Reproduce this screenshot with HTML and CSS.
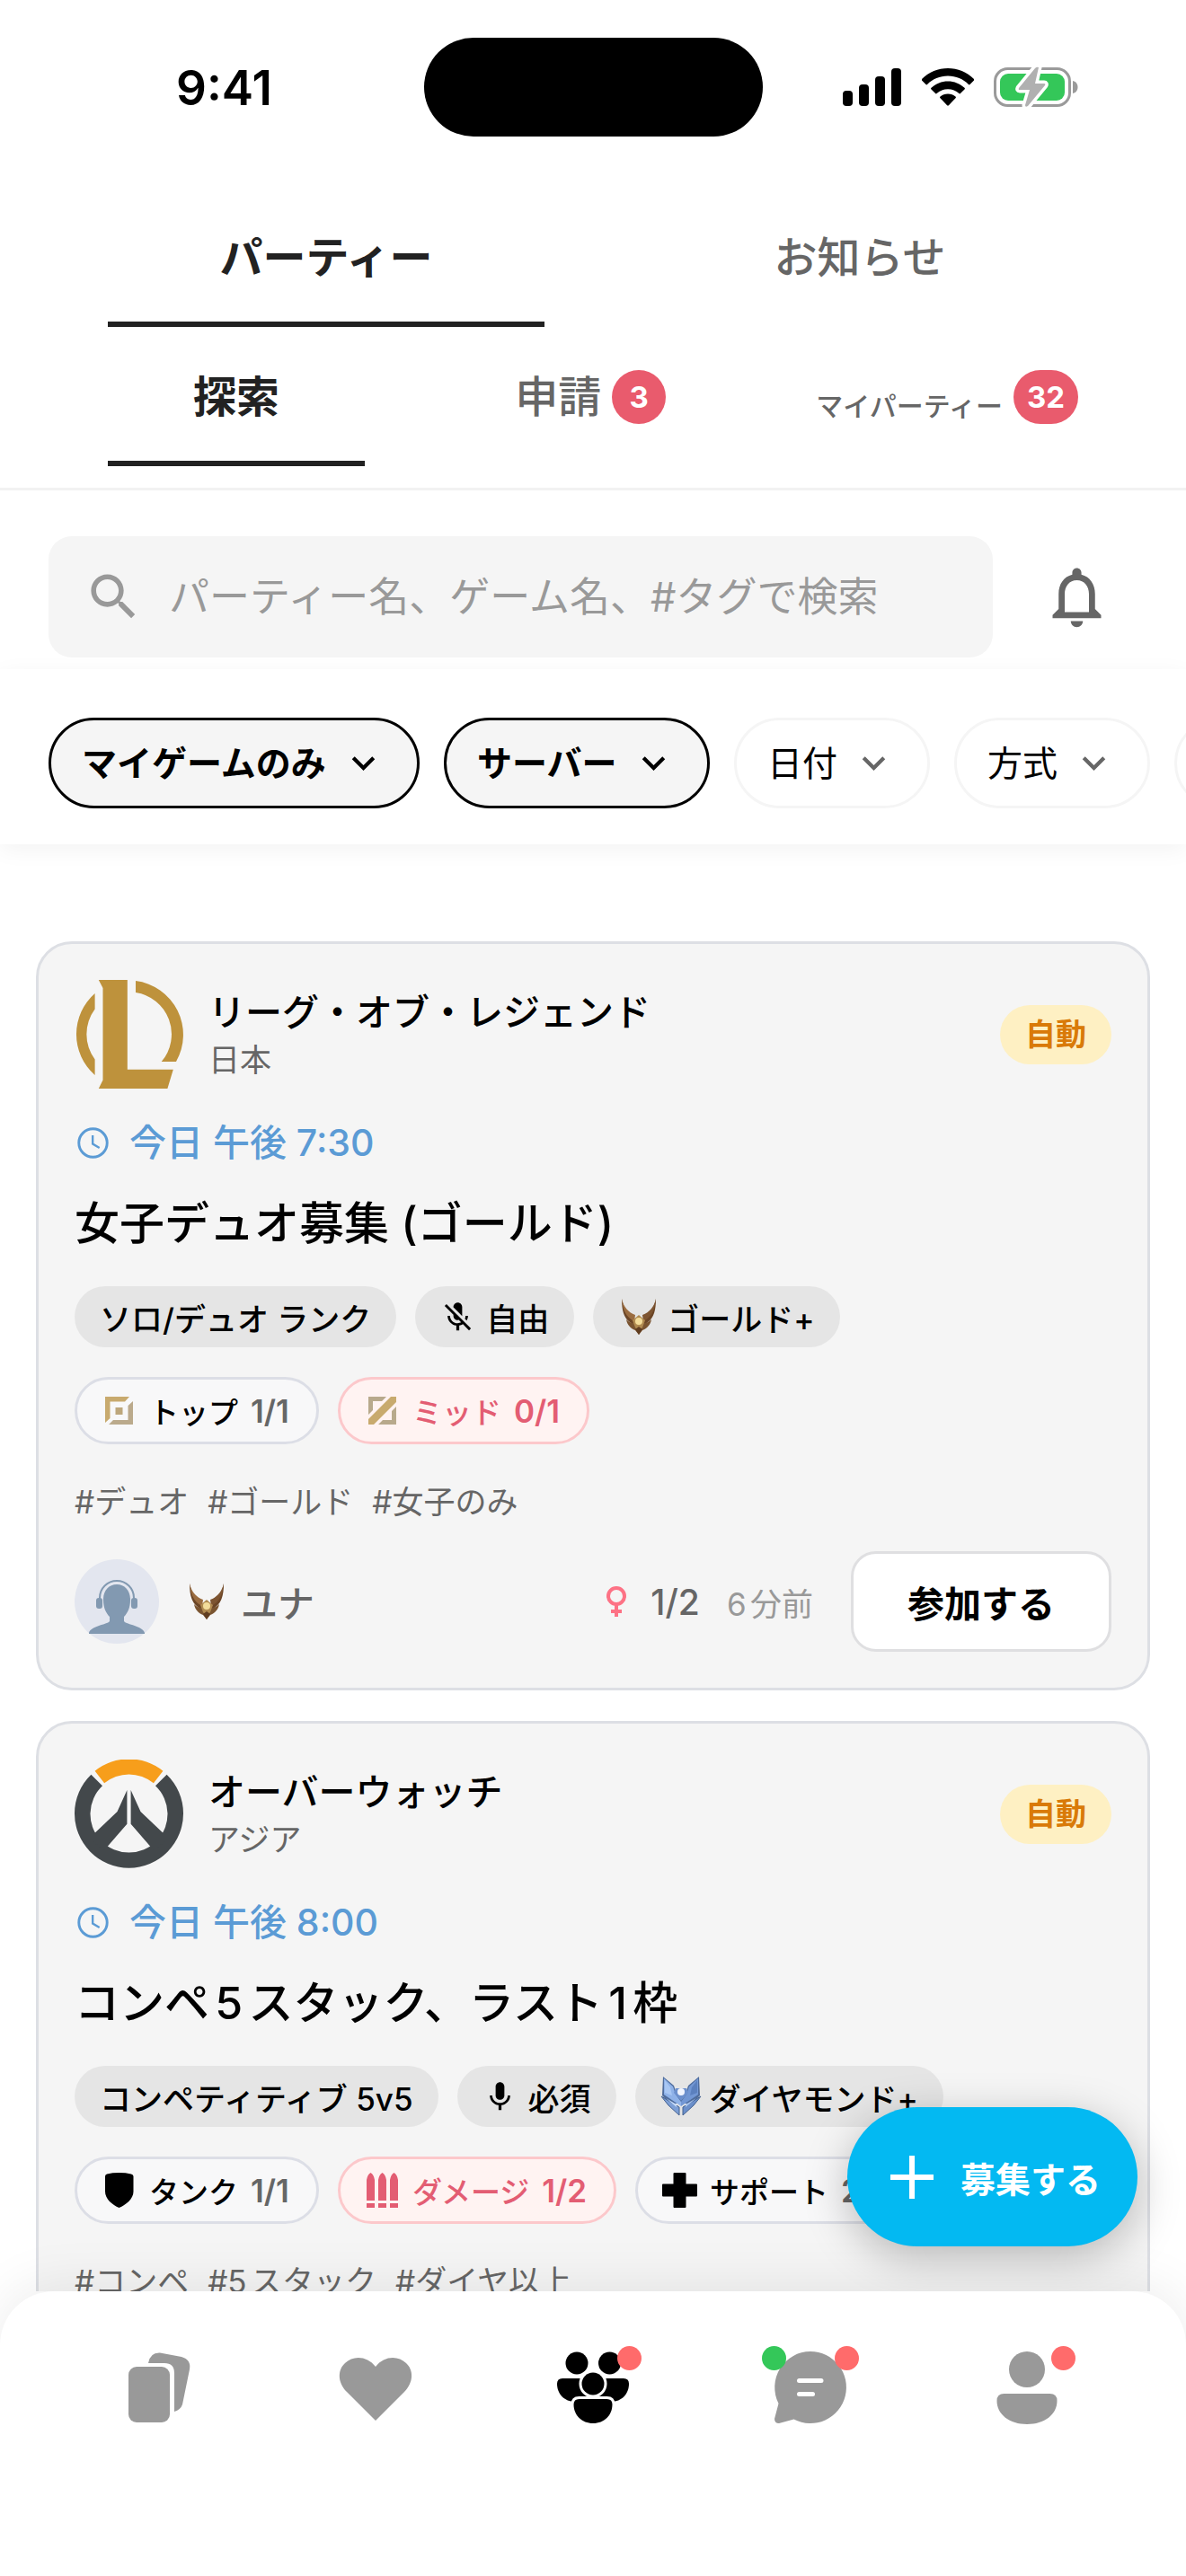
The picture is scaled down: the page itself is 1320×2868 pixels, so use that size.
FILE: index.html
```html
<!DOCTYPE html>
<html lang="ja">
<head>
    <meta charset="UTF-8">
    <meta name="viewport" content="width=device-width, initial-scale=1.0">
    <title>パーティー</title>
    <link rel="stylesheet" href="styles.css">
</head>
<body>
    <!-- Shared icons -->
    <svg class="sprite" aria-hidden="true">
        <symbol id="chevron" viewBox="0 0 24 24">
            <path d="M16.59 8.59 12 13.17 7.41 8.59 6 10l6 6 6-6z" fill="currentColor"/>
        </symbol>
        <symbol id="clock" viewBox="0 0 24 24">
            <circle cx="12" cy="12" r="9.2" fill="none" stroke="currentColor" stroke-width="1.7"/>
            <path d="M11.8 7v5.6l4.4 2.6" fill="none" stroke="currentColor" stroke-width="1.4"/>
        </symbol>
        <symbol id="mic" viewBox="0 0 24 24">
            <path d="M12 14c1.66 0 2.99-1.34 2.99-3L15 5c0-1.66-1.34-3-3-3S9 3.34 9 5v6c0 1.66 1.34 3 3 3zm5.3-3c0 3-2.54 5.1-5.3 5.1S6.7 14 6.7 11H5c0 3.41 2.72 6.23 6 6.72V21h2v-3.28c3.28-.48 6-3.3 6-6.72h-1.7z"/>
        </symbol>
        <symbol id="mic-off" viewBox="0 0 24 24">
            <path d="M19 11h-1.7c0 .74-.16 1.43-.43 2.05l1.23 1.23c.56-.98.9-2.09.9-3.28zm-4.02.17c0-.06.02-.11.02-.17V5c0-1.66-1.34-3-3-3S9 3.34 9 5v.18l5.98 5.99zM4.27 3L3 4.27l6.01 6.01V11c0 1.66 1.33 3 2.99 3 .22 0 .44-.03.65-.08l1.66 1.66c-.71.33-1.5.52-2.31.52-2.76 0-5.3-2.1-5.3-5.1H5c0 3.41 2.72 6.23 6 6.72V21h2v-3.28c.91-.13 1.77-.45 2.54-.9L19.73 21 21 19.73 4.27 3z"/>
        </symbol>
        <symbol id="rank-gold" viewBox="0 0 46 46">
            <path d="M4 3c0 12 2 21 9 26l5 4 3-4-3-3C10 21 6 13 4 3z" fill="#6b4526"/>
            <path d="M42 3c0 12-2 21-9 26l-5 4-3-4 3-3c8-5 12-13 14-23z" fill="#6b4526"/>
            <path d="M4 3c2 9 7 15 15 18l-1 7C9 24 5 15 4 3z" fill="#9a6c40"/>
            <path d="M42 3c-2 9-7 15-15 18l1 7c9-4 13-13 14-25z" fill="#7d5431"/>
            <path d="M9 26c3 3 6 4 9 4l5 12 5-12c3 0 6-1 9-4-1 6-5 10-10 12l-4 5-4-5c-5-2-9-6-10-12z" fill="#7a5430"/>
            <path d="m23 21 7 6-3 8-4 5-4-5-3-8z" fill="#b08a50"/>
            <path d="m23 34 4 3-4 6-4-6z" fill="#5f3c20"/>
            <circle cx="23" cy="28" r="4" fill="#f3dc9a"/>
        </symbol>
        <symbol id="rank-diamond" viewBox="0 0 46 46">
            <path d="M3 1l12 10 3 9 5 7 5-7 3-9L43 1l1 21-10 11-11-4-11 4L2 22z" fill="#4f6c9c"/>
            <path d="M4 3l10 9 3 9 6 8v5L4 21z" fill="#8fb2e8"/>
            <path d="M42 3 32 12l-3 9-6 8v5l19-13z" fill="#7297d4"/>
            <path d="M5 5l6 8 2 9-8-3z" fill="#a9c7f3"/>
            <path d="M41 5l-6 8-2 9 8-3z" fill="#5b80be"/>
            <path d="M1 23l20 12v9L9 33z" fill="#7d9fd6" stroke="#42608f"/>
            <path d="M45 23 25 35v9l12-11z" fill="#6b8fca" stroke="#42608f"/>
            <path d="M6 25l12 7v3z" fill="#c3d9f8"/>
            <path d="M40 25l-12 7v3z" fill="#a7c4ee"/>
            <path d="M17 14h12l2 5-8 9-8-9z" fill="#6c90cd"/>
            <circle cx="23" cy="18" r="4" fill="#f2f6ff"/>
        </symbol>
        <symbol id="role-top" viewBox="-4 -4 39 39">
            <path d="M0 0h27l-5 5.5H5.5V24L0 29z" fill="#c8aa6e"/>
            <path d="M31 5v26H4l5-5h16.5V10z" fill="#bbaa8c"/>
            <path d="M11.500 12h8v8h-8z" fill="#bda77c"/>
        </symbol>
        <symbol id="role-mid" viewBox="-4 -4 39 39">
            <path d="M0 31v-6L25 0h6v6L6 31z" fill="#c8aa6e"/>
            <path d="M0 0h20l-5 5H5v10l-5 5z" fill="#b8a98c"/>
            <path d="M31 31H11l5-5h10V16l5-5z" fill="#b8a98c"/>
        </symbol>
        <symbol id="role-tank" viewBox="0 0 39 39">
            <path d="M4 4q0-2 2-2.6Q12 0 19.500 0T33 1.4q2.5.6 2.5 2.6v17C35.500 29 27 36 19.500 39 12 36 4 29 4 21z"/>
        </symbol>
        <symbol id="role-damage" viewBox="0 0 39 39">
            <path d="M2 31V8q1-6 4.500-8Q10 2 11 8v23zM15 31V8q1-6 4.500-8Q23 2 24 8v23zM28 31V8q1-6 4.500-8Q36 2 37 8v23zM2 34h9v5H2zM15 34h9v5h-9zM28 34h9v5h-9z" fill="currentColor"/>
        </symbol>
        <symbol id="role-support" viewBox="0 0 39 39">
            <path d="M13.500 0h12q1 0 1 1v11.500H38q1 0 1 1v12q0 1-1 1H26.500V38q0 1-1 1h-12q-1 0-1-1V26.500H1q-1 0-1-1v-12q0-1 1-1h11.500V1q0-1 1-1z"/>
        </symbol>
    </svg>

    <header class="header">
        <!-- Status bar -->
        <div class="status-bar">
            <span class="time">9:41</span>
            <span class="island"></span>
            <span class="status-icons">
                <svg width="66" height="42" viewBox="0 0 66 42" aria-hidden="true">
                    <rect x="0" y="25" width="11" height="17" rx="4"/>
                    <rect x="18" y="18" width="11" height="24" rx="4"/>
                    <rect x="36" y="9" width="11" height="33" rx="4"/>
                    <rect x="54" y="0" width="11" height="42" rx="4"/>
                </svg>
                <svg width="58" height="42" viewBox="0 0 58 42" aria-hidden="true">
                    <path d="M29 0c11 0 21 4 29 12 .5.5.5 1 0 1.500L53.500 18c-.5.5-1 .5-1.500 0C46 12 38 8.600 29 8.600S12 12 6 18c-.5.5-1 .5-1.500 0L0 13.500c-.5-.5-.5-1 0-1.500C8 4 18 0 29 0z"/>
                    <path d="M29 14.500c7 0 13.500 2.600 18.500 7.300.6.6.6 1.100 0 1.700l-4.600 4.600c-.5.5-1 .5-1.500 0-3.400-3-7.700-4.800-12.400-4.800s-9 1.800-12.400 4.800c-.5.5-1 .5-1.500 0l-4.600-4.600c-.6-.6-.6-1.100 0-1.700 5-4.700 11.500-7.300 18.500-7.300z"/>
                    <path d="M29 28.500c3.300 0 6.200 1.200 8.500 3.100.6.5.6 1.100 0 1.700l-7.600 7.900c-.6.6-1.200.6-1.800 0l-7.600-7.900c-.6-.6-.6-1.200 0-1.700 2.300-1.900 5.200-3.100 8.500-3.100z"/>
                </svg>
                <svg width="94" height="46" viewBox="0 0 94 46" aria-hidden="true">
                    <rect x="1.500" y="2.500" width="83" height="41" rx="14" fill="none" stroke="#9a9a9a" stroke-width="3"/>
                    <rect x="7" y="8" width="72" height="30" rx="9" fill="#34c759"/>
                    <path d="M88 16c4 1 5.500 4 5.500 7s-1.500 6-5.500 7z" fill="#9a9a9a"/>
                    <path d="M50 1q-2-1-4 1L28 24q-1 2 1 2h11l-5 17q0 3 3 1l19-23q1-2-1-2H46z" fill="#b0b0b0" stroke="#fff" stroke-width="7" paint-order="stroke" stroke-linejoin="round"/>
                </svg>
            </span>
        </div>

        <!-- Main tabs -->
        <nav class="tabs">
            <a href="#" class="tab active">パーティー</a>
            <a href="#" class="tab">お知らせ</a>
        </nav>
        <nav class="tabs">
            <a href="#" class="tab active">探索</a>
            <a href="#" class="tab">申請<span class="count">3</span></a>
            <a href="#" class="tab"><span class="tab-small">マイパーティー</span><span class="count">32</span></a>
        </nav>
    </header>

    <!-- Search -->
    <div class="search-row">
        <label class="search-box">
            <svg width="67" height="67" viewBox="0 0 24 24" aria-hidden="true">
                <path d="M15.5 14h-.79l-.28-.27C15.41 12.59 16 11.11 16 9.5 16 5.91 13.09 3 9.5 3S3 5.91 3 9.5 5.91 16 9.5 16c1.61 0 3.09-.59 4.23-1.57l.27.28v.79l5 4.99L20.49 19l-4.99-5zm-6 0C7.01 14 5 11.99 5 9.5S7.01 5 9.5 5 14 7.01 14 9.5 11.99 14 9.5 14z" fill="#999"/>
            </svg>
            <input type="search" class="search-input" placeholder="パーティー名、ゲーム名、#タグで検索" aria-label="検索">
        </label>
        <button class="bell" aria-label="通知">
            <svg width="81" height="81" viewBox="0 0 24 24" aria-hidden="true">
                <path d="M12 22c1.1 0 2-.9 2-2h-4c0 1.1.9 2 2 2zm6-6v-5c0-3.07-1.63-5.64-4.5-6.32V4c0-.83-.67-1.5-1.5-1.5s-1.5.67-1.5 1.5v.68C7.64 5.36 6 7.92 6 11v5l-2 2v1h16v-1l-2-2zm-2 1H8v-6c0-2.48 1.51-4.5 4-4.5s4 2.02 4 4.5v6z" fill="#666"/>
            </svg>
        </button>
    </div>

    <!-- Filters -->
    <div class="filters">
        <div class="filter selected">
            <select aria-label="ゲーム"><option>マイゲームのみ</option></select>
            <svg aria-hidden="true"><use href="#chevron"/></svg>
        </div>
        <div class="filter selected">
            <select aria-label="サーバー"><option>サーバー</option></select>
            <svg aria-hidden="true"><use href="#chevron"/></svg>
        </div>
        <div class="filter">
            <select aria-label="日付"><option>日付</option></select>
            <svg aria-hidden="true"><use href="#chevron"/></svg>
        </div>
        <div class="filter">
            <select aria-label="方式"><option>方式</option></select>
            <svg aria-hidden="true"><use href="#chevron"/></svg>
        </div>
        <div class="filter">
            <select aria-label="性別"><option>性別</option></select>
            <svg aria-hidden="true"><use href="#chevron"/></svg>
        </div>
    </div>

    <!-- Party list -->
    <main class="list">
        <article class="card">
            <div class="card-head">
                <svg class="game-logo" viewBox="0 0 121 121" aria-hidden="true">
                    <g fill="#be923c">
                        <path d="M26.8 0h32v99.700h51l-6.400 21.300H26.800l4.700-9.500V9z"/>
                        <path d="M22.6 15a60.5 60.5 0 0 0 0 91V88.500a47 47 0 0 1 0-56z"/>
                        <path d="M68 1a60.5 60.5 0 0 1 45 90H96.700A47 47 0 0 0 68 14z"/>
                    </g>
                </svg>
                <div class="game">
                    <div class="game-name">リーグ・オブ・レジェンド</div>
                    <div class="region">日本</div>
                </div>
                <span class="badge">自動</span>
            </div>
            <div class="start"><svg aria-hidden="true"><use href="#clock"/></svg>今日 午後 7:30</div>
            <h2>女子デュオ募集 (ゴールド)</h2>
            <div class="chips">
                <span class="chip">ソロ/デュオ ランク</span>
                <span class="chip"><svg class="icon" aria-hidden="true"><use href="#mic-off"/></svg>自由</span>
                <span class="chip rank"><svg class="rank-icon" aria-hidden="true"><use href="#rank-gold"/></svg>ゴールド+</span>
            </div>
            <div class="roles">
                <span class="role"><svg class="icon" aria-hidden="true"><use href="#role-top"/></svg>トップ<b>1/1</b></span>
                <span class="role open"><svg class="icon" aria-hidden="true"><use href="#role-mid"/></svg>ミッド<b>0/1</b></span>
            </div>
            <div class="tags">
                <span>#デュオ</span><span>#ゴールド</span><span>#女子のみ</span>
            </div>
            <div class="card-foot">
                <svg class="avatar" viewBox="0 0 94 94" aria-hidden="true">
                    <circle cx="47" cy="47" r="47" fill="#e3e6ef"/>
                    <path d="M47 28c9 0 15 7 15 17 0 9-3 15-7 19v5c3 4 21 5 23 13v1H16v-1c2-8 20-9 23-13v-5c-4-4-7-10-7-19 0-10 6-17 15-17z" fill="#8299b1"/>
                    <path d="M28 46V43a19 19 0 0 1 38 0v3" fill="none" stroke="#8299b1" stroke-width="2"/>
                    <rect x="24" y="43" width="7" height="12" rx="3" fill="#8299b1"/>
                    <rect x="63" y="43" width="7" height="12" rx="3" fill="#8299b1"/>
                </svg>
                <svg class="rank-icon" aria-hidden="true"><use href="#rank-gold"/></svg>
                <span class="host">ユナ</span>
                <svg class="gender" viewBox="0 0 22 34" aria-hidden="true">
                    <circle cx="11" cy="11" r="9" fill="none" stroke="#fd7285" stroke-width="4"/>
                    <path d="M9 20h4v6h4v4h-4v4H9v-4H5v-4h4z" fill="#fd7285"/>
                </svg>
                <span class="members">1/2</span>
                <span class="ago">6分前</span>
                <button class="join">参加する</button>
            </div>
        </article>

        <article class="card">
            <div class="card-head">
                <svg class="game-logo" viewBox="0 0 121 121" aria-hidden="true">
                    <path d="M22.600 12.700a60.500 60.500 0 0 1 75.800 0L87.900 26.300a43 43 0 0 0-54.800 0z" fill="#f79e1b"/>
                    <g fill="#43484b">
                        <path d="M18.400 16.700a60.500 60.500 0 1 0 84.200 0L90 29.300a43 43 0 1 1-59 0z"/>
                        <path d="M58.400 34 47.500 58 16 88l17 13 25.400-29.300z"/>
                        <path d="M62.600 34 73.500 58l31.500 30-17 13-25.400-29.300z"/>
                    </g>
                </svg>
                <div class="game">
                    <div class="game-name">オーバーウォッチ</div>
                    <div class="region">アジア</div>
                </div>
                <span class="badge">自動</span>
            </div>
            <div class="start"><svg aria-hidden="true"><use href="#clock"/></svg>今日 午後 8:00</div>
            <h2>コンペ5スタック、ラスト1枠</h2>
            <div class="chips">
                <span class="chip">コンペティティブ 5v5</span>
                <span class="chip"><svg class="icon" aria-hidden="true"><use href="#mic"/></svg>必須</span>
                <span class="chip rank"><svg class="rank-icon" aria-hidden="true"><use href="#rank-diamond"/></svg>ダイヤモンド+</span>
            </div>
            <div class="roles">
                <span class="role"><svg class="icon" aria-hidden="true"><use href="#role-tank"/></svg>タンク<b>1/1</b></span>
                <span class="role open"><svg class="icon" aria-hidden="true"><use href="#role-damage"/></svg>ダメージ<b>1/2</b></span>
                <span class="role"><svg class="icon" aria-hidden="true"><use href="#role-support"/></svg>サポート<b>2/2</b></span>
            </div>
            <div class="tags">
                <span>#コンペ</span><span>#5スタック</span><span>#ダイヤ以上</span>
            </div>
        </article>

        <button class="create">
            <svg width="48" height="48" viewBox="0 0 48 48" aria-hidden="true">
                <path d="M24 0v48M0 24h48" stroke="#fff" stroke-width="6"/>
            </svg>
            募集する
        </button>
    </main>

    <!-- Bottom navigation -->
    <nav class="bottom-nav">
        <a href="#" aria-label="カード">
            <svg viewBox="0 0 80 80" aria-hidden="true">
                <rect x="6" y="17" width="46" height="62" rx="9"/>
                <path d="M28 13Q30 1 41 1.500L65 6q11 3 9 14l-8 39q-2 6-9 8V24q0-11-11-11z"/>
            </svg>
        </a>
        <a href="#" aria-label="いいね">
            <svg viewBox="0 0 80 80" aria-hidden="true">
                <path d="M40 77 8 45C-3 34-2 20 6 13c9-9 25-8 34 4 9-12 25-13 34-4 8 7 9 21-2 32z"/>
            </svg>
        </a>
        <a href="#" class="current" aria-label="パーティー">
            <svg viewBox="0 0 80 80" aria-hidden="true">
                <circle cx="22" cy="13" r="12.500"/>
                <circle cx="58.500" cy="13" r="12.500"/>
                <path d="M0 36q0-6 6-6h68q6 0 6 6c0 11-8 20-20 20H20C8 56 0 47 0 36z"/>
                <g stroke="#fff" stroke-width="6" paint-order="stroke">
                    <path d="M18.500 59q0-6 6-6h31q6 0 6 6c0 12-9 21-21.500 21s-21.500-9-21.500-21z"/>
                    <circle cx="40" cy="36" r="12.500"/>
                </g>
            </svg>
            <span class="dot right"></span>
        </a>
        <a href="#" aria-label="チャット">
            <svg viewBox="0 0 80 80" aria-hidden="true">
                <path d="M40 0a40 40 0 1 1-18.500 75.500L5 80q-5 0-5-5l4.500-17A40 40 0 0 1 40 0z"/>
                <path d="M27.500 32.500h24.500M27.500 47.500h15" stroke="#fff" stroke-width="5" stroke-linecap="round"/>
            </svg>
            <span class="dot left"></span>
            <span class="dot right"></span>
        </a>
        <a href="#" aria-label="プロフィール">
            <svg viewBox="0 0 80 80" aria-hidden="true">
                <circle cx="40" cy="20" r="20"/>
                <path d="M6.500 55q0-8 8-8h51q8 0 8 8c0 15-14 26-33.500 26S6.500 70 6.500 55z"/>
            </svg>
            <span class="dot right"></span>
        </a>
    </nav>
</body>
</html>
```

FILE: styles.css
```css
* {
    box-sizing: border-box;
}
body {
    margin: 0;
    height: 100vh;
    display: flex;
    flex-direction: column;
    overflow: hidden;
    background: #fff;
    color: #000;
    font-family: Inter, "Noto Sans CJK JP", sans-serif;
    text-autospace: normal;
}
a {
    color: inherit;
    text-decoration: none;
}
button, select, input {
    border: none;
    margin: 0;
    padding: 0;
    background: none;
    font-family: inherit;
    color: inherit;
}
.sprite {
    display: none;
}

/* Status bar */
.header {
    flex: none;
    border-bottom: 3px solid #f2f2f2;
    padding-bottom: 24px;
}
.status-bar {
    height: 209px;
    padding: 42px 120px 0;
    display: grid;
    grid-template-columns: 1fr 377px 1fr;
    align-items: start;
}
.time {
    padding: 24px 0 0 76px;
    font-size: 53px;
    line-height: 64px;
    font-weight: 600;
}
.island {
    height: 110px;
    border-radius: 55px;
    background: #000;
}
.status-icons {
    height: 110px;
    display: flex;
    align-items: center;
    justify-content: flex-end;
    gap: 22px;
}

/* Tabs */
.tabs {
    display: flex;
    gap: 108px;
    padding: 0 120px;
}
.tab {
    flex: 1 1 0;
    display: flex;
    justify-content: center;
    gap: 12px;
    padding: 48px 0 41px;
    border-bottom: 6px solid transparent;
    font-size: 48px;
    line-height: 60px;
    font-weight: 500;
    color: #666;
    white-space: nowrap;
}
.tab.active {
    color: #222;
    border-color: #222;
    font-weight: 700;
}
.tab-small {
    align-self: flex-end;
    font-size: 30px;
    line-height: 40px;
}
.count {
    min-width: 60px;
    height: 60px;
    padding: 0 15px;
    border-radius: 30px;
    background: #e95b6d;
    color: #fff;
    font-size: 33px;
    font-weight: 700;
    text-align: center;
}

/* Search */
.search-row {
    flex: none;
    display: flex;
    align-items: center;
    gap: 53px;
    padding: 51px 81px 13px 54px;
}
.search-box {
    flex: 1;
    height: 135px;
    display: flex;
    align-items: center;
    gap: 28px;
    padding: 0 39px;
    border-radius: 26px;
    background: #f5f5f5;
}
.search-input {
    flex: 1;
    min-width: 0;
    font-size: 45px;
    outline: none;
}
.search-input::placeholder {
    color: #999;
}
.bell {
    height: 81px;
}

/* Filters */
.filters {
    flex: none;
    display: flex;
    gap: 27px;
    padding: 54px 0 40px 54px;
    overflow: hidden;
    box-shadow: 0 6px 24px rgba(0, 0, 0, 0.05);
}
.filter {
    flex: none;
    height: 101px;
    display: flex;
    align-items: center;
    gap: 14px;
    padding: 0 34px;
    border: 3px solid #f5f5f5;
    border-radius: 51px;
}
.filter select {
    appearance: none;
    font-size: 39px;
}
.filter svg {
    width: 51px;
    height: 51px;
    color: #666;
}
.filter.selected {
    background: #f5f5f5;
    border-color: #000;
}
.filter.selected select {
    font-weight: 600;
}
.filter.selected svg {
    color: #000;
}

/* Party cards */
.list {
    position: relative;
    flex: 1;
    min-height: 0;
    overflow: hidden;
    padding: 108px 40px 0;
}
.card {
    margin-bottom: 34px;
    padding: 40px;
    border: 3px solid #dddfe4;
    border-radius: 40px;
    background: #f5f5f5;
}
.card-head {
    display: flex;
    align-items: center;
    gap: 28px;
}
.game-logo {
    width: 121px;
    height: 121px;
}
.game {
    flex: 1;
}
.game-name {
    font-size: 41px;
    line-height: 56px;
    font-weight: 500;
}
.region {
    font-size: 35px;
    line-height: 50px;
    color: #666;
}
.badge {
    padding: 0 28px;
    border-radius: 33px;
    background: #fef0c3;
    color: #d97a08;
    font-size: 34px;
    line-height: 66px;
    font-weight: 700;
}
.start {
    display: flex;
    align-items: center;
    gap: 20px;
    margin-top: 30px;
    font-size: 41px;
    line-height: 60px;
    font-weight: 500;
    color: #5b9bd5;
}
.start svg {
    width: 41px;
    height: 41px;
}
h2 {
    margin: 24px 0 34px;
    font-size: 50px;
    line-height: 72px;
    font-weight: 500;
}
.chips, .roles {
    display: flex;
    gap: 21px;
    white-space: nowrap;
}
.chip {
    display: flex;
    align-items: center;
    gap: 12px;
    height: 68px;
    padding: 0 28px;
    border-radius: 34px;
    background: #e5e5e5;
    font-size: 35px;
    font-weight: 500;
}
.icon {
    width: 39px;
    height: 39px;
}
.rank-icon {
    width: 46px;
    height: 46px;
}
.rank {
    gap: 9px;
}
.roles {
    margin-top: 33px;
}
.role {
    display: flex;
    align-items: center;
    gap: 14px;
    height: 75px;
    padding: 0 30px 0 27px;
    border: 3px solid #dcdee6;
    border-radius: 38px;
    background: #f8f8f9;
    font-size: 33px;
    font-weight: 500;
}
.role b {
    font-size: 35px;
    font-weight: 600;
    color: #666;
}
.role.open {
    border-color: #fcc8cb;
    background: #fff3f2;
    color: #e35d73;
}
.role.open b {
    color: inherit;
}
.tags {
    display: flex;
    gap: 21px;
    margin: 39px 0 30px;
    font-size: 35px;
    line-height: 50px;
    color: #666;
}
.card-foot {
    display: flex;
    align-items: center;
    color: #666;
}
.avatar {
    width: 94px;
    height: 94px;
    margin-right: 30px;
}
.host {
    flex: 1;
    margin-left: 15px;
    font-size: 41px;
    font-weight: 500;
}
.gender {
    width: 22px;
    height: 34px;
    margin-right: 27px;
}
.members {
    margin-right: 30px;
    font-size: 39px;
    font-weight: 500;
}
.ago {
    margin-right: 42px;
    font-size: 35px;
    color: #999;
}
.join {
    height: 112px;
    padding: 0 60px;
    border: 3px solid #dfdfe1;
    border-radius: 28px;
    background: #fff;
    color: #000;
    font-size: 41px;
    font-weight: 700;
}

/* Floating button */
.create {
    position: absolute;
    right: 54px;
    bottom: 50px;
    height: 155px;
    display: flex;
    align-items: center;
    gap: 30px;
    padding: 0 41px 0 48px;
    border-radius: 78px;
    background: #03b9f2;
    box-shadow: 0 12px 48px rgba(0, 0, 0, 0.25);
    color: #fff;
    font-size: 39px;
    font-weight: 700;
}

/* Bottom navigation */
.bottom-nav {
    position: relative;
    flex: none;
    height: 317px;
    display: flex;
    justify-content: space-around;
    align-items: flex-start;
    padding: 67px 56px 0;
    border-radius: 60px 60px 0 0;
    background: #fff;
    box-shadow: 0 -6px 60px rgba(0, 0, 0, 0.08);
}
.bottom-nav a {
    position: relative;
    width: 80px;
    height: 80px;
}
.bottom-nav svg {
    width: 80px;
    height: 80px;
    overflow: visible;
    fill: #999;
}
.bottom-nav .current svg {
    fill: #000;
}
.dot {
    position: absolute;
    top: -6px;
    width: 27px;
    height: 27px;
    border-radius: 50%;
}
.dot.right {
    right: -14px;
    background: #ff6b6b;
}
.dot.left {
    left: -14px;
    background: #34c759;
}
```
